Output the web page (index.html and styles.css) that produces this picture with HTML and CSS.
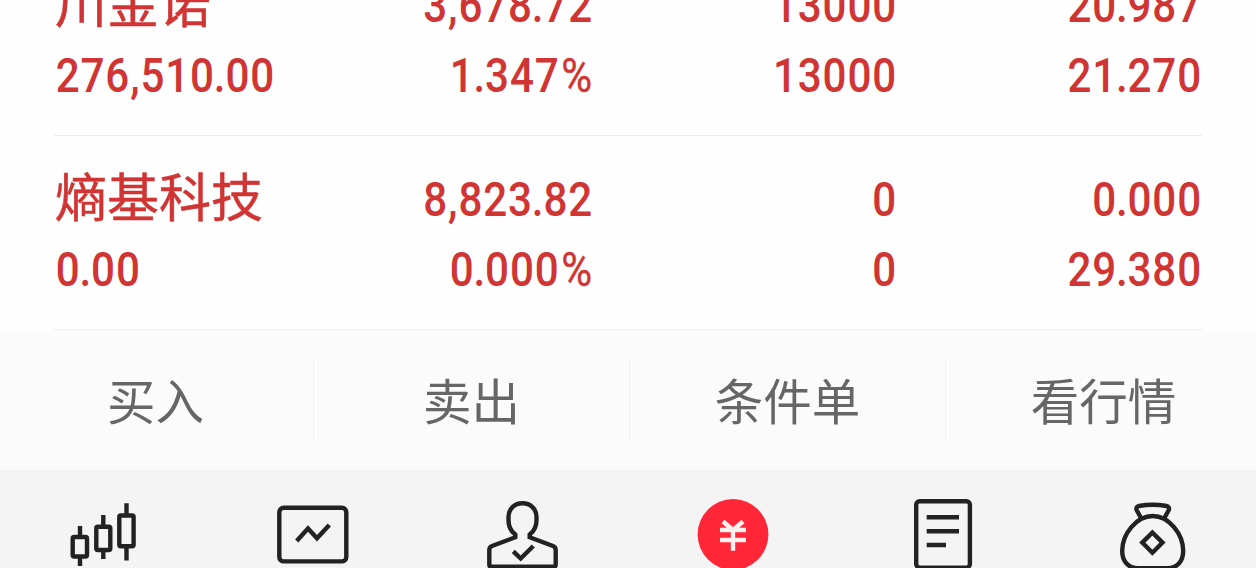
FILE: index.html
```html
<!DOCTYPE html>
<html lang="zh-CN">
<head>
    <meta charset="UTF-8">
    <meta name="viewport" content="width=device-width, initial-scale=1.0">
    <title>持仓</title>
    <link rel="stylesheet" href="styles.css">
</head>
<body>
    <div class="holdings">
        <div class="holding">
            <div class="name">川金诺</div>
            <div class="num">3,678<i>.</i>72</div>
            <div class="num">13000</div>
            <div class="num">20<i>.</i>987</div>
            <div class="num left">276,510<i>.</i>00</div>
            <div class="num">1<i>.</i>347<b>%</b></div>
            <div class="num">13000</div>
            <div class="num">21<i>.</i>270</div>
        </div>
        <div class="holding">
            <div class="name">熵基科技</div>
            <div class="num">8,823<i>.</i>82</div>
            <div class="num">0</div>
            <div class="num">0<i>.</i>000</div>
            <div class="num left">0<i>.</i>00</div>
            <div class="num">0<i>.</i>000<b>%</b></div>
            <div class="num">0</div>
            <div class="num">29<i>.</i>380</div>
        </div>
    </div>

    <div class="actions">
        <div class="action">买入</div>
        <div class="action">卖出</div>
        <div class="action">条件单</div>
        <div class="action">看行情</div>
    </div>

    <nav class="tabbar">
        <a class="tab">
            <svg viewBox="0 0 80 80">
                <rect x="7.7" y="47" width="14.3" height="19.5" rx="1.5"/>
                <rect x="31.3" y="36.7" width="14" height="23.3" rx="1.5"/>
                <rect x="54.3" y="25.5" width="14.3" height="30.8" rx="1.5"/>
                <path d="M15 36V47M15 66V76M38.3 25V36M38.3 60V69M61.5 13.3V25M61.5 57V70.5"/>
            </svg>
        </a>
        <a class="tab">
            <svg viewBox="0 0 80 80">
                <rect x="5.3" y="17.8" width="67" height="53.6" rx="4.5"/>
                <path d="M22.7 51L34 38.5L43 48.3L55.3 35"/>
            </svg>
        </a>
        <a class="tab">
            <svg viewBox="0 0 80 80">
                <path d="M32.3 49V44.5C27.5 41 25.5 36 25.5 30V27C25.5 19 31.5 13.3 39.5 13.3S53.5 19 53.5 27V30C53.5 36 51.5 41 46.7 44.5V49"/>
                <path d="M33 47L9 56Q6.3 57 6.3 60V74.5Q6.3 76.7 8.5 76.7H70.5Q72.7 76.7 72.7 74.5V60Q72.7 57 70 56L46 47"/>
                <path d="M30.3 61.3L37.7 68.5L50.3 56"/>
            </svg>
        </a>
        <a class="tab active">
            <svg viewBox="0 0 80 80">
                <circle cx="40" cy="44.5" r="35.4"/>
                <path d="M27 40H53M27 50H53M40 39V60.7M30 31.5L40 40L50 31.5"/>
            </svg>
        </a>
        <a class="tab">
            <svg viewBox="0 0 80 80">
                <rect x="14.2" y="11.3" width="53.7" height="66.3" rx="3.5"/>
                <path d="M24.7 27.3H57M24.7 41.3H57M24.7 55H44"/>
            </svg>
        </a>
        <a class="tab">
            <svg viewBox="0 0 80 80">
                <path d="M41.7 26C25.5 26 11.2 44 11.2 61C11.2 71.5 17.5 78.3 27 78.3H56.4C65.9 78.3 72.2 71.5 72.2 61C72.2 44 57.9 26 41.7 26Z"/>
                <path d="M30 28L25.6 20Q24.6 16.8 28 16Q41.7 13.6 55.4 16Q58.8 16.8 57.8 20L53.4 28"/>
                <path d="M41.4 42.5L51.5 52.6L41.4 62.7L31.3 52.6Z"/>
            </svg>
        </a>
    </nav>
</body>
</html>
```
FILE: styles.css
```css
body {
    margin: 0;
    height: 568px;
    overflow: hidden;
    background: #fefefe;
    font-family: "Roboto", "Noto Sans CJK SC", sans-serif;
}

/* the list is scrolled, the first row is partly hidden */
.holdings {
    margin: -58px 54px 0;
}

.holding {
    display: grid;
    grid-template-columns: 235px 304px 304px 305px;
    grid-template-rows: 70px 70px;
    height: 194px;
    padding-top: 27px;
    box-sizing: border-box;
    border-bottom: 1px solid #ececec;
    color: #d03433;
    line-height: 70px;
    white-space: nowrap;
}

.name {
    padding-left: 1px;
    font-family: "Noto Sans CJK SC", sans-serif;
    font-size: 52px;
    font-weight: 400;
    line-height: 64px;
    -webkit-text-stroke: 0.5px #d03433;
}

.num {
    padding-top: 2px;
    font-size: 49px;
    font-weight: 500;
    letter-spacing: 1px;
    text-align: right;
    transform: scaleX(0.86);
    transform-origin: right;
}

.num.left {
    padding-left: 2px;
    text-align: left;
    transform-origin: left;
}

.num i {
    font-style: normal;
    margin: 0 -1.2px;
}

.num b {
    margin-left: 2px;
    font-weight: 400;
    -webkit-text-stroke: 0.4px #d03433;
}

.actions {
    display: grid;
    grid-template-columns: repeat(4, 316px);
    height: 140px;
    margin-left: -2px;
    padding-top: 28px;
    box-sizing: border-box;
    background: #fbfbfb;
}

.action {
    height: 83px;
    border-right: 1px solid #efefef;
    font-family: "Noto Sans CJK SC", sans-serif;
    font-size: 48.5px;
    font-weight: 400;
    line-height: 83px;
    text-align: center;
    color: #666;
}

.tabbar {
    display: grid;
    grid-template-columns: repeat(6, 1fr);
    height: 98px;
    background: #f4f4f4;
}

.tab {
    display: flex;
    justify-content: center;
    padding-top: 20px;
}

.tab svg {
    width: 80px;
    height: 80px;
    fill: none;
    stroke: #222;
    stroke-width: 4.4;
}

.tab.active svg {
    stroke: #fff0f0;
}

.tab.active circle {
    fill: #ff2638;
    stroke: none;
}
```
